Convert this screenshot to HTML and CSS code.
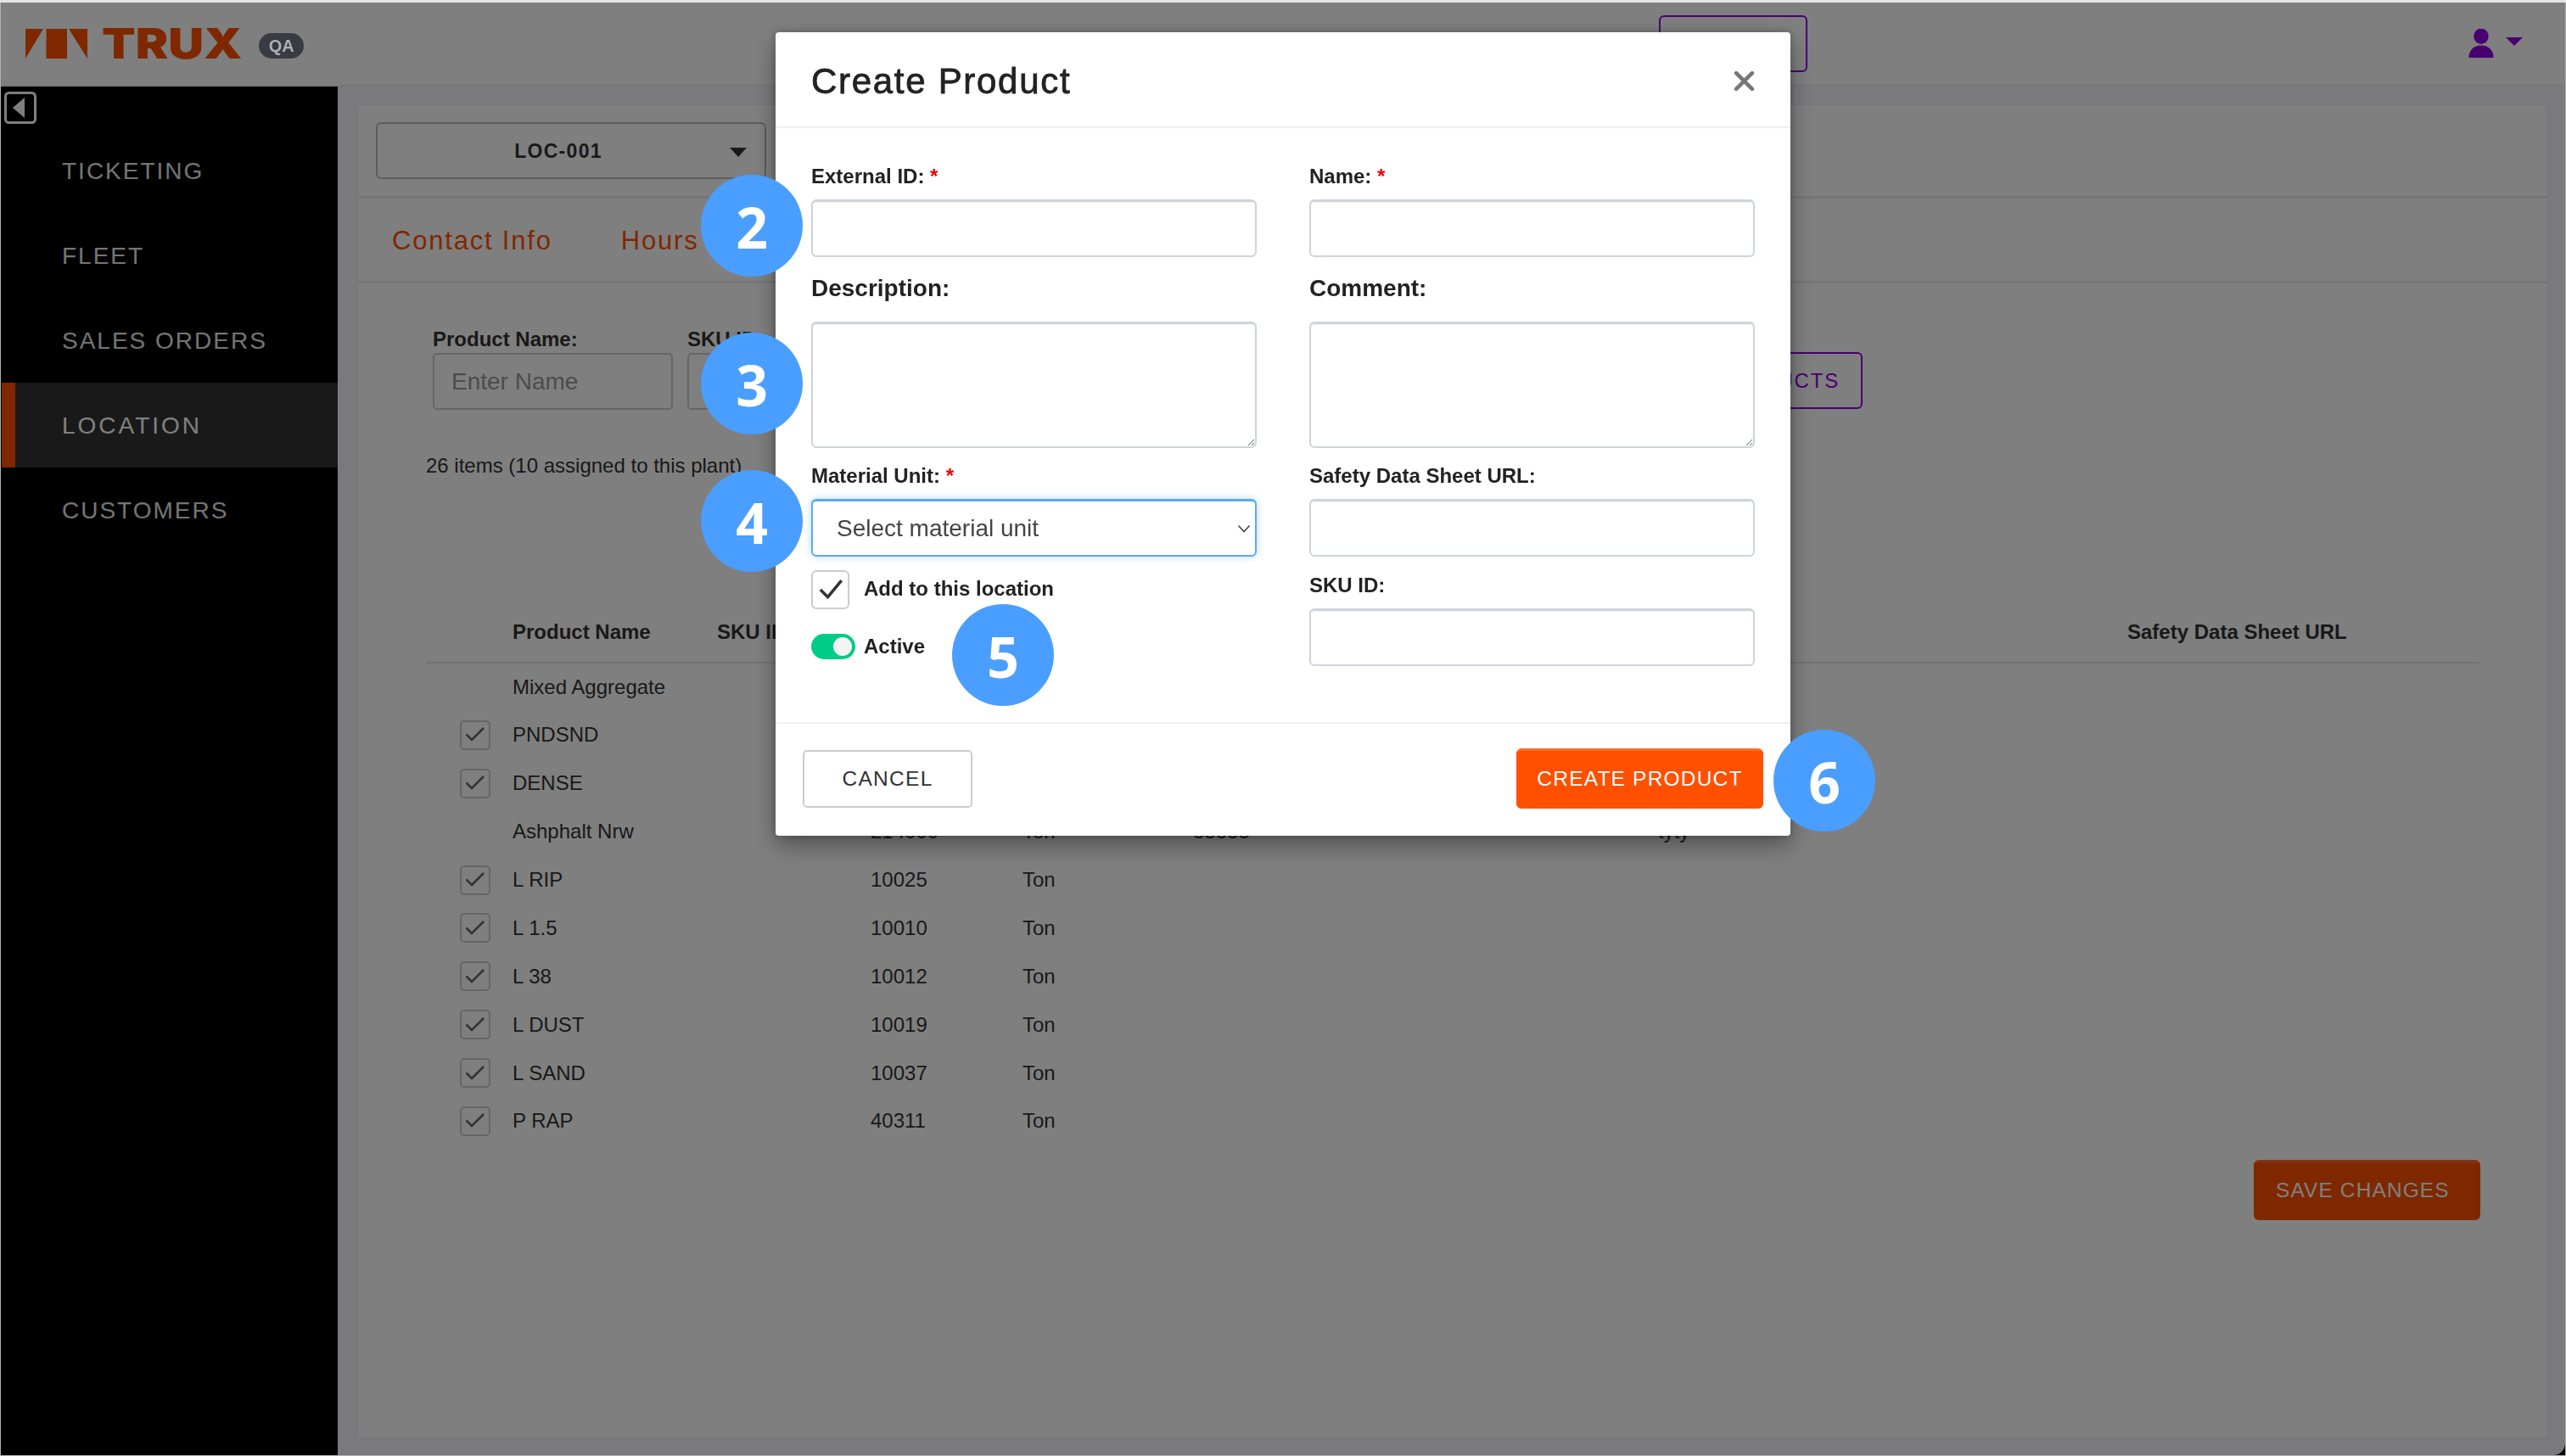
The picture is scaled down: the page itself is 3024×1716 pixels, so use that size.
FILE: index.html
```html
<!DOCTYPE html>
<html lang="en">
<head>
<meta charset="utf-8">
<title>Create Product</title>
<link rel="stylesheet" href="styles.css">
</head>
<body>
<div class="app">
  <header class="topbar">
    <div class="brand">
      <svg class="logo-mark" viewBox="0 0 73 35" aria-hidden="true">
        <path d="M0 0 H21 L0 35 Z M24.5 0 H49 V35 H24.5 Z M51 0 H73 V35 Z" fill="#ff5000"/>
      </svg>
      <span class="wordmark">TRUX</span>
      <span class="env-pill">QA</span>
    </div>
    <div class="top-action"></div>
    <div class="user-menu">
      <svg class="user-icon" viewBox="0 0 32 36" aria-hidden="true">
        <ellipse cx="16" cy="9" rx="9" ry="9.5" fill="#9000e0"/>
        <path d="M1 35 C1 26 7 20 16 20 C25 20 31 26 31 35 Z" fill="#9000e0"/>
      </svg>
      <span class="user-caret"></span>
    </div>
  </header>
  <div class="body-row">
    <nav class="sidebar">
      <div class="collapse">
        <svg viewBox="0 0 38 38" aria-hidden="true">
          <rect x="1.5" y="1.5" width="35" height="35" rx="4" fill="none" stroke="#fff" stroke-width="3"/>
          <path d="M24 7 V31 L10 19 Z" fill="#fff"/>
        </svg>
      </div>
      <a class="nav-item">TICKETING</a>
      <a class="nav-item">FLEET</a>
      <a class="nav-item">SALES ORDERS</a>
      <a class="nav-item is-active">LOCATION</a>
      <a class="nav-item">CUSTOMERS</a>
    </nav>
    <main class="main">
      <section class="card">
        <div class="loc-row">
          <div class="loc-select"><span>LOC-001</span><i class="loc-caret"></i></div>
        </div>
        <div class="tabs">
          <a class="tab">Contact Info</a>
          <a class="tab">Hours</a>
        </div>
        <div class="panel">
          <div class="filters">
            <div class="filter filter-name">
              <label>Product Name:</label>
              <div class="fake-input">Enter Name</div>
            </div>
            <div class="filter filter-sku">
              <label>SKU ID:</label>
              <div class="fake-input"></div>
            </div>
            <button class="outline-btn">ADD PRODUCTS</button>
          </div>
          <p class="count">26 items (10 assigned to this plant)</p>
          <table class="products">
            <thead>
              <tr><th class="c-check"></th><th class="c-name">Product Name</th><th class="c-sku">SKU ID</th><th class="c-id"></th><th class="c-unit"></th><th class="c-desc"></th><th class="c-comment"></th><th class="c-url">Safety Data Sheet URL</th></tr>
            </thead>
            <tbody>
              <tr><td class="c-check"></td><td>Mixed Aggregate</td><td></td><td></td><td></td><td></td><td></td><td></td></tr>
              <tr><td class="c-check"><span class="tick"><svg viewBox="0 0 24 24"><path d="M1.5 11.5 L8 18 L22 4" fill="none" stroke="#666" stroke-width="2.6"/></svg></span></td><td>PNDSND</td><td></td><td></td><td></td><td></td><td></td><td></td></tr>
              <tr><td class="c-check"><span class="tick"><svg viewBox="0 0 24 24"><path d="M1.5 11.5 L8 18 L22 4" fill="none" stroke="#666" stroke-width="2.6"/></svg></span></td><td>DENSE</td><td></td><td></td><td></td><td></td><td></td><td></td></tr>
              <tr><td class="c-check"></td><td>Ashphalt Nrw</td><td></td><td>214000</td><td>Ton</td><td>33333</td><td>tyty</td><td></td></tr>
              <tr><td class="c-check"><span class="tick"><svg viewBox="0 0 24 24"><path d="M1.5 11.5 L8 18 L22 4" fill="none" stroke="#666" stroke-width="2.6"/></svg></span></td><td>L RIP</td><td></td><td>10025</td><td>Ton</td><td></td><td></td><td></td></tr>
              <tr><td class="c-check"><span class="tick"><svg viewBox="0 0 24 24"><path d="M1.5 11.5 L8 18 L22 4" fill="none" stroke="#666" stroke-width="2.6"/></svg></span></td><td>L 1.5</td><td></td><td>10010</td><td>Ton</td><td></td><td></td><td></td></tr>
              <tr><td class="c-check"><span class="tick"><svg viewBox="0 0 24 24"><path d="M1.5 11.5 L8 18 L22 4" fill="none" stroke="#666" stroke-width="2.6"/></svg></span></td><td>L 38</td><td></td><td>10012</td><td>Ton</td><td></td><td></td><td></td></tr>
              <tr><td class="c-check"><span class="tick"><svg viewBox="0 0 24 24"><path d="M1.5 11.5 L8 18 L22 4" fill="none" stroke="#666" stroke-width="2.6"/></svg></span></td><td>L DUST</td><td></td><td>10019</td><td>Ton</td><td></td><td></td><td></td></tr>
              <tr><td class="c-check"><span class="tick"><svg viewBox="0 0 24 24"><path d="M1.5 11.5 L8 18 L22 4" fill="none" stroke="#666" stroke-width="2.6"/></svg></span></td><td>L SAND</td><td></td><td>10037</td><td>Ton</td><td></td><td></td><td></td></tr>
              <tr><td class="c-check"><span class="tick"><svg viewBox="0 0 24 24"><path d="M1.5 11.5 L8 18 L22 4" fill="none" stroke="#666" stroke-width="2.6"/></svg></span></td><td>P RAP</td><td></td><td>40311</td><td>Ton</td><td></td><td></td><td></td></tr>
            </tbody>
          </table>
          <div class="save-row"><button class="save-btn">SAVE CHANGES</button></div>
        </div>
      </section>
    </main>
  </div>
</div>

<div class="backdrop"></div>

<div class="modal" role="dialog">
  <div class="modal-head">
    <h2>Create Product</h2>
    <svg class="close" viewBox="0 0 24 24" aria-hidden="true"><path d="M3 3 L21 21 M21 3 L3 21" stroke="#777" stroke-width="4.4" stroke-linecap="round"/></svg>
  </div>
  <div class="modal-body">
    <div class="col">
      <label class="lab lab-a">External ID: <b>*</b></label>
      <input class="field" type="text">
      <label class="lab lab-big">Description:</label>
      <textarea class="field area"></textarea>
      <label class="lab lab-c">Material Unit: <b>*</b></label>
      <div class="field select-focus"><span>Select material unit</span>
        <svg viewBox="0 0 16 10" aria-hidden="true"><path d="M1.5 1.5 L8 8.5 L14.5 1.5" fill="none" stroke="#444" stroke-width="1.6"/></svg>
      </div>
      <div class="check-row">
        <span class="check"><svg viewBox="0 0 26 26"><path d="M2.5 13 L10 20.5 L24 3.5" fill="none" stroke="#333" stroke-width="3"/></svg></span>
        <span class="check-text">Add to this location</span>
      </div>
      <div class="toggle-row">
        <span class="toggle"><i></i></span>
        <span class="check-text">Active</span>
      </div>
    </div>
    <div class="col">
      <label class="lab lab-a">Name: <b>*</b></label>
      <input class="field" type="text">
      <label class="lab lab-big">Comment:</label>
      <textarea class="field area"></textarea>
      <label class="lab lab-c">Safety Data Sheet URL:</label>
      <input class="field" type="text">
      <label class="lab lab-d">SKU ID:</label>
      <input class="field" type="text">
    </div>
  </div>
  <div class="modal-foot">
    <button class="cancel">CANCEL</button>
    <button class="create">CREATE PRODUCT</button>
  </div>
</div>

<span class="step step-2">2</span>
<span class="step step-3">3</span>
<span class="step step-4">4</span>
<span class="step step-5">5</span>
<span class="step step-6">6</span>
</body>
</html>
```

FILE: styles.css
```css
* { box-sizing: border-box; }
html, body { margin: 0; height: 100%; }
body {
  width: 3024px;
  height: 1716px;
  overflow: hidden;
  background: #b0b0b0;
  border-top: 3px solid #e4e4e4;
  font-family: "Liberation Sans", Arial, sans-serif;
  color: #333;
  padding: 0 1px 1px 1px;
  position: relative;
}
.app { height: 100%; display: flex; flex-direction: column; background: #fff; }

.topbar {
  height: 99px;
  flex: none;
  background: #fff;
  border-bottom: 2px solid #f0f0f2;
  display: flex;
  align-items: center;
  padding: 0 50px 0 29px;
  position: relative;
}
.brand { display: flex; align-items: center; }
.logo-mark { width: 73px; height: 35px; display: block; }
.wordmark {
  font-family: "Inter", "Liberation Sans", sans-serif;
  font-size: 49px;
  font-weight: 900;
  color: #ff5000;
  letter-spacing: 0;
  margin-left: 17px;
  line-height: 36px;
  transform: scaleX(1.18);
  transform-origin: left center;
}
.env-pill {
  margin-left: 45px;
  width: 53px;
  height: 30px;
  border-radius: 15px;
  background: #383c42;
  color: #aeb1b4;
  font-size: 20px;
  font-weight: 700;
  text-align: center;
  line-height: 31px;
  margin-top: 4px;
  position: relative;
  z-index: 2;
}
.top-action {
  position: absolute;
  left: 1954px;
  top: 15px;
  width: 175px;
  height: 67px;
  border: 2px solid #9000e0;
  border-radius: 6px;
}
.user-menu { margin-left: auto; display: flex; align-items: center; gap: 13px; }
.user-icon { width: 32px; height: 35px; }
.user-caret {
  width: 0; height: 0;
  border-left: 10px solid transparent;
  border-right: 10px solid transparent;
  border-top: 10px solid #9000e0;
  margin-bottom: 5px;
}

.body-row { flex: 1; display: flex; min-height: 0; background: #000; }
.sidebar { width: 396px; flex: none; background: #000; position: relative; padding-top: 49px; margin-left: 1px; }
.collapse { position: absolute; left: 3px; top: 6px; width: 38px; height: 38px; }
.collapse svg { width: 100%; height: 100%; display: block; }
.nav-item {
  display: flex;
  align-items: center;
  height: 100px;
  padding-left: 71px;
  padding-top: 2px;
  font-size: 28px;
  letter-spacing: 2px;
  font-weight: 400;
  color: #e8e8e8;
}
.nav-item.is-active {
  background: #333;
  border-left: 16px solid #ff5000;
  padding-left: 55px;
  color: #fff;
  letter-spacing: 3px;
}

.main { flex: 1; min-width: 0; background: #f5f5f8; padding: 22px 21px 21px 24px; border-bottom-right-radius: 14px; }
.card {
  height: 100%;
  background: #fff;
  border-radius: 4px;
  box-shadow: 0 0 0 1px #f0f0f2;
  display: flex;
  flex-direction: column;
}
.loc-row { height: 110px; flex: none; border-bottom: 3px solid #ececee; padding: 20px 21px; }
.loc-select {
  width: 460px;
  height: 67px;
  border: 2px solid #bbb;
  border-radius: 6px;
  background: #fff;
  display: flex;
  align-items: center;
  justify-content: center;
  padding-right: 30px;
  padding-top: 2px;
  font-size: 23px;
  font-weight: 700;
  letter-spacing: 1.3px;
  color: #333;
  position: relative;
}
.loc-caret {
  position: absolute;
  right: 21px;
  top: 28px;
  width: 0; height: 0;
  border-left: 10px solid transparent;
  border-right: 10px solid transparent;
  border-top: 11px solid #333;
}
.tabs { height: 100px; flex: none; border-bottom: 3px solid #ececee; display: flex; align-items: center; padding-left: 40px; gap: 81px; padding-top: 3px; }
.tab { font-size: 31px; letter-spacing: 1.8px; color: #ff5000; }
.panel { flex: 1; padding: 0 86px 0 80px; position: relative; display: flex; flex-direction: column; min-height: 0; }
.filters { display: flex; align-items: flex-start; gap: 17px; margin-top: 51px; padding-left: 8px; position: relative; height: 96px; }
.filter label { display: block; font-size: 24px; font-weight: 700; line-height: 28px; color: #333; margin-bottom: 2px; margin-top: 1px; white-space: nowrap; }
.fake-input { height: 67px; border: 2px solid #ccc; border-radius: 5px; background: #fff; padding-left: 20px; font-size: 28px; line-height: 64px; color: #999; }
.filter-name { width: 283px; }
.filter-sku { width: 260px; }
.outline-btn {
  position: absolute;
  left: 1130px;
  top: 1px;
  width: 563px;
  height: 67px;
  margin-top: 29px;
  background: #fff;
  border: 2px solid #9000e0;
  border-radius: 6px;
  color: #9000e0;
  font: 400 24px "Liberation Sans", Arial, sans-serif;
  letter-spacing: 1.8px;
  text-align: right;
  padding-right: 25px;
}
.count { margin: 0; font-size: 24px; line-height: 30px; color: #333; position: absolute; left: 80px; top: 200px; }

.products { border-collapse: collapse; table-layout: fixed; width: 2420px; margin-top: 221px; font-size: 24px; }
.products th { text-align: left; height: 79px; border-bottom: 2px solid #e4e4e6; font-weight: 700; color: #333; padding: 0; vertical-align: top; padding-top: 29px; }
.products td { height: 56.9px; padding: 0; color: #333; }
.c-check { width: 102px; }
.c-name { width: 241px; }
.c-sku { width: 181px; }
.c-id { width: 179px; }
.c-unit { width: 201px; }
.c-desc { width: 548px; }
.c-comment { width: 553px; }
.c-url { width: 415px; }
.products td.c-check { padding-left: 40px; }
.tick { width: 36px; height: 35px; border: 2px solid #ccc; border-radius: 5px; display: flex; align-items: center; justify-content: center; background: #fff; }
.tick svg { width: 24px; height: 24px; }

.save-row { display: flex; justify-content: flex-end; position: absolute; right: 79px; top: 1033px; }
.save-btn {
  width: 267px;
  height: 71px;
  border: 0;
  border-top: 3px solid #ff6a2a;
  border-radius: 6px;
  background: #ff5000;
  color: #fff;
  font: 400 24.5px "Liberation Sans", Arial, sans-serif;
  letter-spacing: 1.1px;
  text-align: left;
  padding: 0 0 3px 26px;
}

.backdrop { position: fixed; inset: 0; background: rgba(0, 0, 0, .5); clip-path: inset(3px 1px 1px 1px); }

.modal {
  position: fixed;
  left: 914px;
  top: 38px;
  width: 1196px;
  height: 947px;
  background: #fff;
  border-radius: 4px;
  box-shadow: 0 12px 28px rgba(0,0,0,.35), 0 0 10px rgba(0,0,0,.25);
  display: flex;
  flex-direction: column;
  color: #1f1f1f;
  z-index: 3;
}
.modal-head {
  height: 113px;
  flex: none;
  border-bottom: 2px solid #eeeff1;
  display: flex;
  align-items: center;
  justify-content: space-between;
  padding: 4px 42px 0;
}
.modal-head h2 { margin: 0; font-size: 42px; font-weight: 400; letter-spacing: 1.7px; color: #222; -webkit-text-stroke: .8px #222; }
.close { width: 25px; height: 25px; }
.modal-body { flex: 1; display: grid; grid-template-columns: 525px 525px; column-gap: 62px; padding: 0 0 0 42px; }
.col { display: flex; flex-direction: column; align-items: stretch; }
.lab { display: block; font-weight: 700; color: #222; }
.lab b { color: #e00; font-weight: 700; }
.lab-a { font-size: 24px; line-height: 28px; margin-top: 43px; margin-bottom: 13px; }
.lab-big { font-size: 28px; line-height: 32px; margin-top: 21px; margin-bottom: 23px; }
.lab-c { font-size: 24px; line-height: 28px; margin-top: 19px; margin-bottom: 13px; }
.lab-d { font-size: 24px; line-height: 28px; margin-top: 20px; margin-bottom: 13px; }
.field {
  display: block;
  width: 100%;
  height: 68px;
  border: 2px solid #cfd3da;
  border-top-width: 3px;
  border-radius: 6px;
  background: #fff;
  margin: 0;
  outline: 0;
  box-shadow: inset 0 1px 2px rgba(0,0,0,.06);
  font: 400 28px "Liberation Sans", Arial, sans-serif;
}
.area { height: 149px; resize: both; }
.select-focus {
  height: 68px;
  border: 2px solid #5aa9f0;
  border-top-width: 3px;
  box-shadow: 0 0 8px rgba(90,169,240,.45);
  display: flex;
  align-items: center;
  justify-content: space-between;
  padding: 0 5px 0 28px;
  color: #444;
  font-size: 28px;
}
.select-focus svg { width: 16px; height: 10px; }
.check-row { display: flex; align-items: center; gap: 17px; margin-top: 16px; }
.check { width: 45px; height: 46px; border: 2px solid #ccc; border-radius: 6px; display: flex; align-items: center; justify-content: center; }
.check svg { width: 30px; height: 30px; }
.check-text { font-size: 24px; font-weight: 700; color: #222; }
.check-row .check-text { padding-bottom: 2px; }
.toggle-row { display: flex; align-items: center; gap: 10px; margin-top: 28px; height: 30px; padding-top: 1px; }
.toggle { width: 52px; height: 30px; border-radius: 15px; background: #00cc88; position: relative; display: block; }
.toggle i { position: absolute; right: 4px; top: 4px; width: 22px; height: 22px; border-radius: 50%; background: #f3f3f3; }
.modal-foot {
  height: 134px;
  flex: none;
  border-top: 2px solid #eeeff1;
  display: flex;
  align-items: center;
  justify-content: space-between;
  padding: 0 32px 3px 32px;
}
.cancel {
  width: 200px;
  height: 68px;
  background: #fff;
  border: 2px solid #ccc;
  border-radius: 5px;
  color: #333;
  font: 400 24.5px "Liberation Sans", Arial, sans-serif;
  letter-spacing: 1.3px;
}
.create {
  width: 291px;
  height: 71px;
  background: #ff5000;
  border: 0;
  border-top: 3px solid #ff6a2a;
  border-radius: 6px;
  color: #fff;
  font: 400 24.5px "Liberation Sans", Arial, sans-serif;
  letter-spacing: 1.2px;
  padding-bottom: 4px;
}

.step {
  position: fixed;
  width: 120px;
  height: 120px;
  border-radius: 50%;
  background: #4a9eff;
  color: #fff;
  font-family: "Open Sans", sans-serif;
  font-weight: 700;
  font-size: 66px;
  line-height: 122px;
  text-align: center;
  z-index: 4;
}
.step-2 { left: 826px; top: 206px; }
.step-3 { left: 826px; top: 392px; }
.step-4 { left: 826px; top: 554px; }
.step-5 { left: 1122px; top: 712px; }
.step-6 { left: 2090px; top: 860px; }
```
